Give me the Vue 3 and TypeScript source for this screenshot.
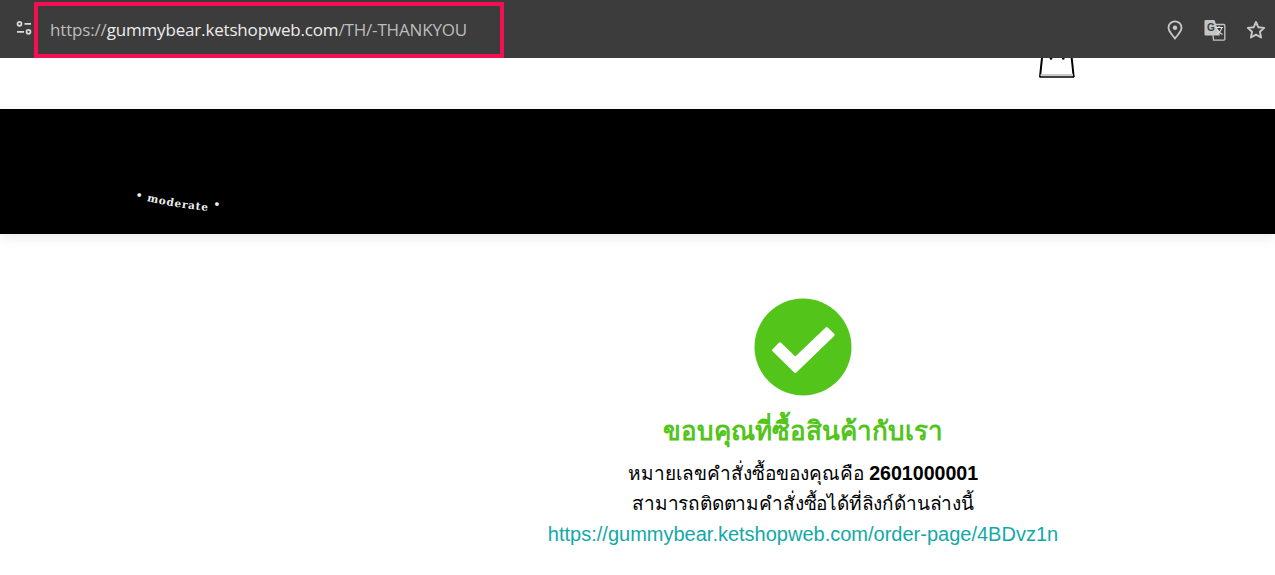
<template>
  <div class="page">
    <header class="toolbar">
      <svg class="tune" width="18" height="18" viewBox="0 0 18 18" fill="none" stroke="#dadada" stroke-width="1.700">
        <circle cx="4.500" cy="4.800" r="2" />
        <path d="M9.500 4.800h6.500M2 12.800h7" />
        <circle cx="13.500" cy="12.800" r="2" />
      </svg>
      <div class="address">
        <span>https://<b>gummybear.ketshopweb.com</b>/TH/-THANKYOU</span>
      </div>
      <div class="actions">
        <svg width="18" height="20" viewBox="0 0 18 20" fill="none" stroke="#c8c8c8" stroke-width="1.800">
          <path d="M9 18.500C6 14.500 2.500 11.500 2.500 7.800a6.500 6.500 0 0 1 13 0c0 3.700-3.500 6.700-6.500 10.700z" />
          <circle cx="9" cy="7.800" r="2.200" fill="#c8c8c8" stroke="none" />
        </svg>
        <svg width="22" height="22" viewBox="0 0 22 22">
          <path d="M8 5.500h12a.8.8 0 0 1 .8.8v14a.8.8 0 0 1-.8.8H9.500z" fill="#3c3c3c" stroke="#c4c4c4" stroke-width="1.300" />
          <path d="M1.500 1h9l5.500 15.500H1.500a1 1 0 0 1-1-1V2a1 1 0 0 1 1-1z" fill="#c4c4c4" />
          <text x="3" y="12" class="g-letter">G</text>
          <path d="M11.500 8.500h7.500M15 7v1.500M17.800 8.500c-.7 3-3 5.500-5.300 6.700M13.200 10.500c1 2 2.800 3.700 5.300 5" fill="none" stroke="#e2e2e2" stroke-width="1.100" />
        </svg>
        <svg width="20" height="20" viewBox="0 0 20 20" fill="none" stroke="#c8c8c8" stroke-width="1.900" stroke-linejoin="round">
          <path d="M10 2l2.400 5.300 5.800.6-4.300 3.900 1.200 5.700L10 14.600l-5.100 2.900 1.200-5.700L1.800 7.900l5.800-.6z" />
        </svg>
      </div>
    </header>

    <section class="shop-bar">
      <svg class="bag" width="36" height="21" viewBox="0 0 36 21" fill="none">
        <path d="M3 0L1 19M32.700 0l2 19" stroke="#000" stroke-width="2" />
        <path d="M1.500 17h32.500" stroke="#c9c9c9" stroke-width="2" />
        <path d="M0.500 19h34.500" stroke="#000" stroke-width="1.700" />
        <circle cx="12" cy="0.500" r="1.300" fill="#000" />
        <circle cx="24.300" cy="0.500" r="1.300" fill="#000" />
      </svg>
    </section>

    <section class="banner">
      <svg class="logo" width="110" height="40" viewBox="0 0 110 40">
        <defs>
          <path id="curve" d="M2 8L14 11Q50 19 76 21Q84 21 90 13L108 3" fill="none" />
        </defs>
        <text class="logo-text">
          <textPath href="#curve">• moderate &nbsp;•</textPath>
        </text>
      </svg>
    </section>

    <main class="content">
      <div class="result">
        <svg class="check" width="98" height="98" viewBox="0 0 98 98">
          <circle cx="49" cy="49" r="48.500" fill="#52c41a" />
          <polygon
            points="26,45.800 41.300,60.500 72.700,30.500 79.100,36.900 41.300,73.500 19.600,52.200"
            fill="#fff"
            stroke="#fff"
            stroke-width="3"
            stroke-linejoin="round"
          />
        </svg>
        <h1 class="title">ขอบคุณที่ซื้อสินค้ากับเรา</h1>
        <p class="line">หมายเลขคำสั่งซื้อของคุณคือ <strong>{{ orderNo }}</strong></p>
        <p class="line line--tight">สามารถติดตามคำสั่งซื้อได้ที่ลิงก์ด้านล่างนี้</p>
        <a class="link" :href="orderUrl">{{ orderUrl }}</a>
      </div>
    </main>
  </div>
</template>

<script setup lang="ts">
const orderNo = "2601000001";
const orderUrl = "https://gummybear.ketshopweb.com/order-page/4BDvz1n";
</script>

<style>
html,
body {
  margin: 0;
  background: #fff;
  overflow: hidden;
}
</style>

<style scoped>
.page {
  width: 1275px;
  height: 575px;
  overflow: hidden;
  font-family: "Liberation Sans", "Noto Sans", sans-serif;
}
.toolbar {
  height: 58px;
  box-sizing: border-box;
  background: #3c3c3c;
  display: flex;
  align-items: flex-start;
}
.tune {
  margin: 19px 0 0 15px;
}
.address {
  margin: 2px 0 0 1px;
  width: 470px;
  height: 56px;
  box-sizing: border-box;
  border: 4px solid #f30f52;
  padding: 0 0 2px 12px;
  display: flex;
  align-items: center;
  font-family: "Open Sans", "Noto Sans", sans-serif;
  font-size: 17px;
  letter-spacing: -0.17px;
  color: #bcbcbc;
}
.address b {
  font-weight: 400;
  color: #ececec;
}
.actions {
  margin-left: auto;
  margin-top: 19px;
  padding-right: 9px;
  display: flex;
  align-items: center;
  gap: 20px;
}
.g-letter {
  font-family: "Liberation Sans", sans-serif;
  font-size: 10px;
  font-weight: 700;
  fill: #3c3c3c;
}
.shop-bar {
  height: 51px;
  background: #fff;
  display: flex;
  align-items: flex-start;
  padding-left: 1039px;
}
.banner {
  height: 125px;
  background: #000;
  box-shadow: 0 4px 12px rgba(0, 0, 0, 0.08);
  padding: 81px 0 0 133px;
  box-sizing: border-box;
}
.logo {
  display: block;
  overflow: visible;
}
.logo-text {
  font-family: "DejaVu Serif", "Liberation Serif", serif;
  font-size: 10.500px;
  font-weight: 700;
  letter-spacing: 0.800px;
  fill: #eee;
}
.content {
  display: flex;
  justify-content: center;
  padding: 64px 0 0 331px;
}
.result {
  display: flex;
  flex-direction: column;
  align-items: center;
}
.title {
  margin: 16px 0 0;
  font-size: 26px;
  line-height: 38px;
  font-weight: 700;
  color: #52c41a;
}
.line {
  margin: 12px 0 0;
  font-size: 19px;
  line-height: 22px;
  color: #000;
}
.line + .line {
  margin-top: 8px;
}
.line--tight {
  letter-spacing: -0.180px;
}
.line strong {
  font-size: 19.600px;
  font-weight: 700;
}
.link {
  margin-top: 8px;
  font-size: 20px;
  line-height: 22px;
  color: #13a8a8;
  text-decoration: none;
}
</style>
